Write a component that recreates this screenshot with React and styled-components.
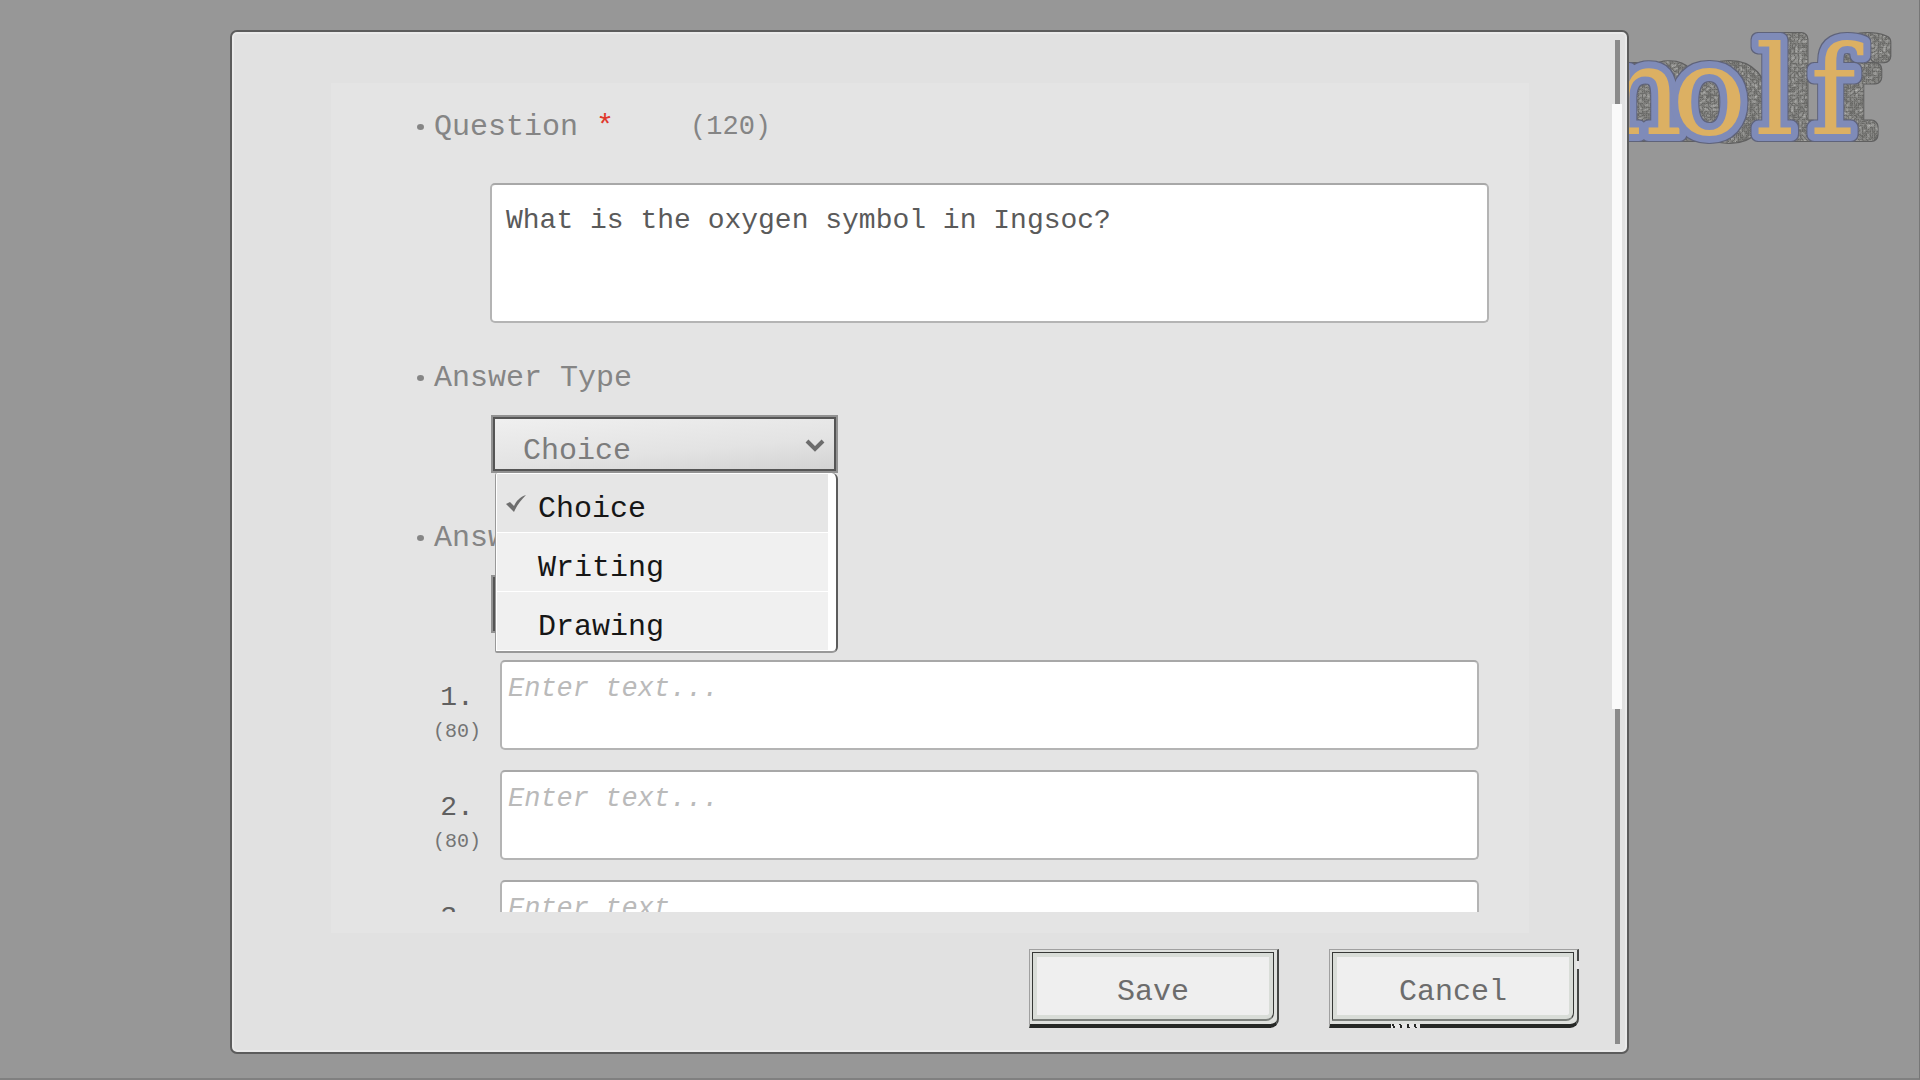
import { useState } from "react"
import styled, { createGlobalStyle } from "styled-components"

const options = ["Choice", "Writing", "Drawing"]

const Logo = () => (
  <LogoArt viewBox="1560 0 360 200" role="img" aria-label="nolf">
    <defs>
      <filter id="cloth" filterUnits="userSpaceOnUse" x="1560" y="0" width="360" height="200" colorInterpolationFilters="sRGB">
        <feMorphology in="SourceAlpha" operator="dilate" radius="1" result="edge" />
        <feFlood floodColor="#5f637a" />
        <feComposite in2="edge" operator="in" result="outline" />
        <feOffset in="edge" dx="20" result="farEdge" />
        <feFlood floodColor="#606060" />
        <feComposite in2="farEdge" operator="in" result="farOutline" />
        <feOffset in="SourceAlpha" dx="20" result="far" />
        <feTurbulence type="turbulence" baseFrequency="0.25" numOctaves="2" seed="4" />
        <feColorMatrix values="0.4 0 0 0 0.4  0.4 0 0 0 0.4  0.4 0 0 0 0.39  0 0 0 0 1" />
        <feComposite in2="far" operator="in" result="weave" />
        <feMerge>
          <feMergeNode in="farOutline" />
          <feMergeNode in="weave" />
          <feMergeNode in="outline" />
          <feMergeNode in="SourceGraphic" />
        </feMerge>
      </filter>
    </defs>
    <text x="1604 1673 1756 1811" y="134" filter="url(#cloth)">nolf</text>
  </LogoArt>
)

const App = () => {
  const [type, setType] = useState("Choice")
  const [question, setQuestion] = useState("What is the oxygen symbol in Ingsoc?")
  return (
    <Page>
      <GlobalStyle />
      <Logo />
      <Modal>
        <Main>
          <Panel>
            <Scroll>
              <LabelRow>
                <Label htmlFor="question">Question <Required>*</Required></Label>
                <Limit>(120)</Limit>
              </LabelRow>
              <Question id="question" maxLength={120} value={question} onChange={(e) => setQuestion(e.target.value)} />

              <LabelRow>
                <Label htmlFor="type">Answer Type</Label>
              </LabelRow>
              <SelectWrap>
                <Select id="type" value={type} onChange={(e) => setType(e.target.value)}>
                  {options.map((o) => <option key={o}>{o}</option>)}
                </Select>
                <Chevron viewBox="0 0 20 14" aria-hidden="true">
                  <path d="M2 3l8 8 8-8" />
                </Chevron>
                <Menu>
                  {options.map((o) => (
                    <li key={o}>
                      <Option type="button" $on={o === type} onClick={() => setType(o)}>
                        <Tick viewBox="0 0 20 18" aria-hidden="true">
                          {o === type && <path d="M0 9l4-2 4 4C10 6 14 2 20 0C15 5 11 10 8 17z" />}
                        </Tick>
                        {o}
                      </Option>
                    </li>
                  ))}
                </Menu>
              </SelectWrap>

              <LabelRow $loose>
                <Label htmlFor="answer">Answer</Label>
              </LabelRow>
              <SelectWrap $under>
                <Select id="answer" />
              </SelectWrap>

              <Answers>
                {[1, 2, 3].map((n) => (
                  <Answer key={n}>
                    <AnswerLabel htmlFor={"answer" + n}>
                      {n}.
                      <Count>(80)</Count>
                    </AnswerLabel>
                    <AnswerText id={"answer" + n} maxLength={80} placeholder="Enter text..." />
                  </Answer>
                ))}
              </Answers>
            </Scroll>
          </Panel>
          <Footer>
            <Button type="button"><Face>Save</Face></Button>
            <Button type="button" $worn><Face>Cancel</Face></Button>
          </Footer>
        </Main>
        <Track>
          <Rail $size={64} />
          <Thumb />
          <Rail $size={335} />
        </Track>
      </Modal>
    </Page>
  )
}

const GlobalStyle = createGlobalStyle`
* { box-sizing: border-box; }
body {
  margin: 0;
  background: #979797;
}
body, button, select, textarea {
  font-family: "Liberation Mono", monospace;
}
`

const Page = styled.div`
  position: relative;
  display: flex;
  height: 100vh;
  padding: 30px 290px 24px 230px;
  border-right: 1px solid #777;
  border-bottom: 2px solid #808080;
  overflow: hidden;
`

const LogoArt = styled.svg`
  position: absolute;
  top: 0;
  right: 0;
  width: 360px;
  height: 200px;
  font-family: "DejaVu Serif", serif;
  font-size: 124px;
  fill: #dcb063;
  stroke: #7f8bb8;
  stroke-width: 14;
  stroke-linejoin: round;
  paint-order: stroke;
`

const Modal = styled.main`
  position: relative;
  display: flex;
  flex: 1;
  min-width: 0;
  background: #e1e1e1;
  border: 2px solid #5c5c5c;
  border-radius: 7px;
  box-shadow: inset 0 0 0 2px #eaeaea;
`

const Main = styled.div`
  display: flex;
  flex: 1;
  flex-direction: column;
  min-width: 0;
`

const Panel = styled.section`
  flex: 1;
  min-height: 0;
  margin: 51px 83px 0 99px;
  padding-bottom: 21px;
  background: #e4e4e4;
`

const Scroll = styled.div`
  height: 100%;
  padding-top: 24px;
  overflow: hidden;
`

const LabelRow = styled.div`
  display: flex;
  align-items: center;
  height: 40px;
  margin-top: ${(p) => (p.$loose ? "45px" : "0")};
  padding-left: 86px;
  color: #858585;
  line-height: 40px;

  &::before {
    content: "";
    width: 7px;
    height: 6px;
    margin-right: 10px;
    border-radius: 50%;
    background: #858585;
  }
`

const Label = styled.label`
  font-size: 30px;
`

const Required = styled.span`
  color: #e0382c;
`

const Limit = styled.span`
  margin-left: 76px;
  font-size: 27px;
`

const TextBox = styled.textarea`
  display: block;
  background: #fff;
  border: 2px solid #b4b4b4;
  border-top-color: #a8a8a8;
  border-radius: 5px;
  color: #5a5a5a;
  line-height: 40px;
  resize: none;
  outline: none;
  overflow: hidden;
`

const Question = styled(TextBox)`
  width: calc(100% - 199px);
  height: 140px;
  margin: 36px 40px 35px 159px;
  padding: 16px 14px;
  font-size: 28px;
`

const SelectWrap = styled.div`
  position: relative;
  z-index: ${(p) => (p.$under ? 0 : 1)};
  width: 347px;
  margin: 17px 0 0 160px;
`

const Select = styled.select`
  display: block;
  width: 100%;
  height: 58px;
  padding: 14px 50px 0 30px;
  appearance: none;
  background: linear-gradient(175deg, #f0f0f0, #e3e3e3 60%, #d2d2d2);
  border: 2px solid #929292;
  box-shadow: inset 0 0 0 2px #555;
  color: #7c7c7c;
  font-size: 30px;
  outline: none;
`

const Chevron = styled.svg`
  position: absolute;
  top: 23px;
  right: 13px;
  width: 20px;
  height: 14px;
  fill: none;
  stroke: #6c6c6c;
  stroke-width: 4;
  pointer-events: none;
`

const Menu = styled.ul`
  position: absolute;
  top: 58px;
  left: 4px;
  right: 0;
  margin: 0;
  padding: 1px 8px 0 1px;
  list-style: none;
  background: #fff;
  border: 1px solid #999;
  border-width: 0 2px 2px 1px;
  border-right-color: #5c5c5c;
  border-radius: 2px 6px 6px 2px;
`

const Option = styled.button`
  display: flex;
  align-items: center;
  width: 100%;
  height: 59px;
  padding: 12px 0 0 9px;
  background: ${(p) => (p.$on ? "#e6e6e6" : "#f0f0f0")};
  border: 0;
  border-bottom: 1px solid #fff;
  color: #161616;
  font-size: 30px;
`

const Tick = styled.svg`
  width: 20px;
  height: 18px;
  margin: 0 12px 10px 0;
  fill: #6e6e6e;
`

const Answers = styled.div`
  display: flex;
  flex-direction: column;
  gap: 20px;
  margin-top: 27px;
  padding: 0 50px 0 85px;
`

const Answer = styled.div`
  display: grid;
  grid-template-columns: 82px 1fr;
  gap: 2px;
`

const AnswerLabel = styled.label`
  padding-top: 18px;
  color: #606060;
  font-size: 28px;
  line-height: 40px;
  text-align: center;
`

const Count = styled.span`
  display: block;
  color: #747474;
  font-size: 20px;
  line-height: 28px;
`

const AnswerText = styled(TextBox)`
  width: 100%;
  height: 90px;
  padding: 7px 6px;
  font-size: 27px;

  &::placeholder {
    color: #bababa;
    font-style: italic;
  }
`

const Footer = styled.footer`
  display: flex;
  justify-content: flex-end;
  gap: 50px;
  padding: 16px 33px 24px;
`

const Button = styled.button`
  position: relative;
  display: flex;
  width: 250px;
  height: 79px;
  padding: 2px 3px 3px 2px;
  background: #dfe1de;
  border-style: solid;
  border-width: 1px 2px 4px 1px;
  border-color: #a0a0a0 #454745 #262826 #a0a0a0;
  border-radius: 0 0 9px 0;
  color: #6c6c6c;
  font-size: 30px;

  &::before {
    content: "";
    display: ${(p) => (p.$worn ? "block" : "none")};
    position: absolute;
    top: 11px;
    right: -2px;
    width: 3px;
    height: 8px;
    background: #e8e8e8;
  }

  &::after {
    content: "";
    display: ${(p) => (p.$worn ? "block" : "none")};
    position: absolute;
    bottom: -4px;
    left: 61px;
    width: 29px;
    height: 4px;
    background: repeating-linear-gradient(75deg, #e8e8e8 0 2px, #262826 2px 4px, #e8e8e8 4px 7px);
  }
`

const Face = styled.span`
  display: flex;
  flex: 1;
  align-self: stretch;
  align-items: center;
  justify-content: center;
  padding-top: 12px;
  background: #efefef;
  border: 1px solid #363836;
  border-bottom: 2px solid #7c807c;
  border-radius: 0 0 8px 0;
  box-shadow: inset 0 0 0 4px #d9ddd8;
`

const Track = styled.div`
  display: flex;
  flex-direction: column;
  align-items: center;
  width: 10px;
  margin: 8px 5px 8px 0;
`

const Rail = styled.div`
  flex: ${(p) => p.$size};
  width: 5px;
  background: #8a8a8a;
`

const Thumb = styled.div`
  flex: 604;
  width: 10px;
  background: #fafafa;
`

export default App
